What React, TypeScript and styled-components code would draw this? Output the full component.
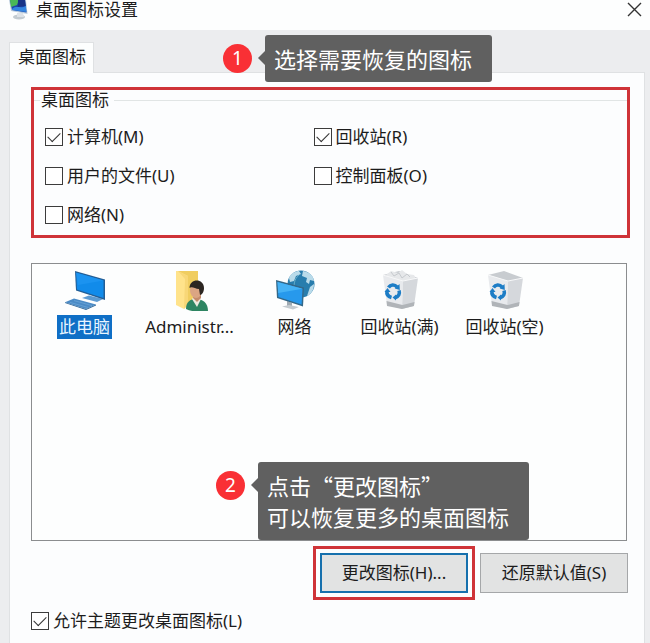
import React from "react";
import styled, { createGlobalStyle } from "styled-components";

const GlobalStyle = createGlobalStyle`
  *, *::before, *::after { box-sizing: border-box; }
  body {
    margin: 0;
    background: #ecedef;
    color: #1c1c1c;
    font: 17px/24px "Noto Sans", "Noto Sans CJK SC", sans-serif;
  }
`;

const Window = styled.div`
  position: relative;
  display: flex;
  flex-direction: column;
  min-height: 100vh;
  padding: 0 5px 0 9px;
  overflow: hidden;
`;

const TitleBar = styled.header`
  display: flex;
  align-items: flex-start;
  gap: 7px;
  height: 30px;
  margin: 0 -5px 0 -9px;
  padding: 0 8px;
  background: #fdfefe;
`;

const Title = styled.h1`
  flex: 1;
  margin: 0;
  font-size: 17px;
  font-weight: 400;
  line-height: 20px;
`;

const CloseButton = styled.button`
  display: flex;
  padding: 2px 0;
  border: 0;
  background: none;
  color: #333;
`;

const TabList = styled.div`
  display: flex;
  margin-top: 12px;
`;

const Tab = styled.button`
  position: relative;
  z-index: 1;
  height: 31px;
  margin-bottom: -1px;
  padding: 0 7px 2px 8px;
  border: 1px solid #dfe1e3;
  border-bottom: 0;
  background: #fdfefe;
  color: inherit;
  font: inherit;
`;

const Panel = styled.section`
  flex: 1;
  padding: 14px 14px 8px 21px;
  border: 1px solid #dfe1e3;
  border-bottom: 0;
  background: #fcfdfe;
`;

const Highlight = styled.div<{ $inset?: number }>`
  padding: ${(p) => p.$inset ?? 0}px;
  border: 3px solid #cf3338;
`;

const Group = styled.fieldset`
  display: grid;
  grid-template-columns: 1fr 1fr;
  row-gap: 15px;
  min-width: 0;
  margin: 0;
  padding: 15px 45px 8px 11px;
  border: 0 solid #e1e5e5;
  border-top-width: 1px;
`;

const Legend = styled.legend`
  margin-left: -5px;
  padding: 0 5px 0 1px;
  line-height: 20px;
`;

const CheckLabel = styled.label`
  display: flex;
  align-items: center;
  gap: 4px;
`;

const CheckBox = styled.input`
  display: grid;
  place-items: center;
  flex: none;
  width: 18px;
  height: 18px;
  margin: 0;
  appearance: none;
  border: 1px solid #3c3c3c;
  background: #fff;

  &:checked::after {
    content: "";
    width: 12px;
    height: 7px;
    margin-bottom: 4px;
    border: solid #333;
    border-width: 0 0 1px 1px;
    transform: rotate(-45deg);
  }
`;

const IconList = styled.ul`
  display: grid;
  grid-template-columns: repeat(auto-fill, 105px);
  align-content: start;
  height: 278px;
  margin: 25px 3px 0 0;
  padding: 6px 0 0;
  border: 1px solid #8b8d8f;
  background: #fdfefe;
  list-style: none;
`;

const IconItem = styled.li`
  display: flex;
  flex-direction: column;
  align-items: center;
  gap: 4px;
`;

const IconName = styled.span<{ $selected?: boolean }>`
  padding: 0 2px;
  background: ${(p) => (p.$selected ? "#0f6fc6" : "transparent")};
  color: ${(p) => (p.$selected ? "#e9f5ff" : "inherit")};
  white-space: nowrap;
`;

const Actions = styled.div`
  display: flex;
  justify-content: flex-end;
  align-items: center;
  gap: 5px;
  margin: 5px 2px 9px 0;
`;

const ActionButton = styled.button<{ $focused?: boolean }>`
  display: block;
  width: 148px;
  height: 40px;
  padding: 0;
  border: ${(p) => (p.$focused ? "2px solid #1670ad" : "1px solid #a5a7a9")};
  background: #e2e3e3;
  color: inherit;
  font: inherit;
`;

const Step = styled.div<{ $x: number; $y: number }>`
  position: absolute;
  z-index: 2;
  left: ${(p) => p.$x}px;
  top: ${(p) => p.$y}px;
  display: flex;
  align-items: flex-start;
  gap: 13px;
`;

const StepNumber = styled.span`
  width: 29px;
  height: 29px;
  margin-top: 9px;
  border-radius: 50%;
  background: #f93035;
  color: #fff;
  font-size: 19px;
  line-height: 28px;
  text-align: center;
`;

const Callout = styled.p`
  position: relative;
  margin: 0;
  padding: 8px 20px 8px 9px;
  border-radius: 3px;
  background: #606060;
  color: #fff;
  font: 22px/31px "Noto Sans CJK SC", sans-serif;
  white-space: nowrap;

  &::before {
    content: "";
    position: absolute;
    top: 16px;
    right: 100%;
    border: solid transparent;
    border-width: 7px 7px 7px 0;
    border-right-color: #606060;
  }
`;

const PersonalizeIcon = () => (
  <svg width="21" height="20" viewBox="0 0 21 20" aria-hidden="true">
    <ellipse cx="11" cy="17" rx="6" ry="2.4" fill="#c3cbd1" />
    <path d="M9 13h6l1 4h-7z" fill="#dde2e7" />
    <path d="M1 0h17l1.500 14L3 11z" fill="#b9cbdc" />
    <path d="M2 0h15l1.500 12.500L4 10z" fill="#1c46ae" />
    <path d="M2 0h9L9 5 3 7z" fill="#49b957" />
    <path d="M10 0h7l.8 6-8 1z" fill="#183387" />
    <path d="M4 9c4-4 9 0 14-3l.4 6L4 10z" fill="#3485df" />
  </svg>
);

const CloseIcon = () => (
  <svg width="15" height="15" viewBox="0 0 15 15" aria-hidden="true">
    <path d="M1 1l13 13M14 1L1 14" stroke="currentColor" strokeWidth="1.4" />
  </svg>
);

const PcIcon = () => (
  <svg width="42" height="41" viewBox="0 0 42 41" aria-hidden="true">
    <path d="M18 28l7-2.5L39 29l-6 3z" fill="#5d9bd2" />
    <path d="M11 1l30 8.500v20.500L12 20.500z" fill="#235e96" />
    <path d="M12.200 2.800L39.500 10.500v17.500L13 19.400z" fill="#118bea" />
    <path d="M12.200 2.800L39.500 10.500 14 15z" fill="#1b93f0" />
    <path d="M1 32.200L10 28.500 32 34.400 22 38.900z" fill="#4b8bc6" />
    <path d="M6 32.400l18 5M10 30.600l18 5" stroke="#6ba4d6" strokeWidth=".8" />
    <path d="M1 32.200l21 6.700 10-4.500v1L22 40 1 33z" fill="#2f6799" />
  </svg>
);

const UserIcon = () => (
  <svg width="42" height="41" viewBox="0 0 42 41" aria-hidden="true">
    <path d="M7 1h22v28l-11 5L7 35z" fill="#f0cd60" />
    <path d="M7 1h2l10 5v29l-4 4-8-4z" fill="#ffe38b" />
    <path d="M19 6v29l-4 4 1-30-7-8z" fill="#f8d777" />
    <path d="M17 39c0-7 4-10 10-10 7 0 12 4 12 12-8 1-16 1-22-2z" fill="#2e8562" />
    <path d="M23 29l5 8 4-8-2-3h-5z" fill="#eee9df" />
    <path d="M24 24h8v4l-4 4-4-4z" fill="#c48b6b" />
    <ellipse cx="27" cy="20.500" rx="6" ry="7.500" fill="#dba583" />
    <path d="M20.500 18c0-10 14.500-10 14.500 0 0 4-2 7-4 7l-1-6c-4 0-7-3-9.500-1z" fill="#2c2622" />
  </svg>
);

const NetworkIcon = () => (
  <svg width="42" height="41" viewBox="0 0 42 41" aria-hidden="true">
    <circle cx="27" cy="14" r="13.500" fill="#287dad" />
    <path d="M15 8c2-5 7-7 10-7l2 3-5 2-2 5-4 1zM29 1c7 1 11 6 11 10l-4-1-1 4-3-2 1-4-5-2zM36 17l4-3c0 6-3 10-7 12z" fill="#b9dbea" />
    <path d="M25 5c-5 4-6 11-4 18" fill="none" stroke="#67aeca" />
    <path d="M13 31l5 2v4h-5z" fill="#9faab2" />
    <path d="M8 36.500l7-1.500 10 2-6 2.500z" fill="#c4cbd0" />
    <path d="M2 10l28 7.500-1 19L3 28z" fill="#346888" />
    <path d="M3.500 12L28.500 18.700l-.9 15.800L4.400 27z" fill="#2799ec" />
    <path d="M3.500 12L28.500 18.700 4.200 23z" fill="#45b2f5" />
  </svg>
);

const BinIcon = ({ full }: { full?: boolean }) => (
  <svg width="42" height="41" viewBox="0 0 42 41" aria-hidden="true">
    <path d="M4 5L20 1l19 7-15 4z" fill="#c8ccd0" />
    {full && (
      <>
        <path d="M7 5l5-4 7 2 4-3 5 4 7 1 2 4-13 3L8 8z" fill="#e6e8ea" />
        <path d="M12 2l3 4 5-3 3 5 5-4 3 3" fill="none" stroke="#c6cace" />
      </>
    )}
    <path d="M4 5l20 6-1 28-15-4z" fill="#e8eaed" />
    <path d="M24 11l15-3-4 28-12 3z" fill="#d5d8dc" />
    <path d="M7.500 31l16 4-.5 4-15-3zM23.500 35l12-3-.6 4-12 3z" fill="#b0b4b8" />
    <path d="M4 5l20 6 15-3" fill="none" stroke="#f7f8f9" />
    <g fill="none" stroke="#1d7dc6" strokeWidth="3.6">
      <path d="M9.500 17.500c2-3 6-3.400 8.500-.5" />
      <path d="M20 20.500c1.200 3.500-.6 6-3.500 7" />
      <path d="M12.500 27.500c-3.500-1-5-3.500-4.500-6.500" />
    </g>
    <path d="M20.500 14l.3 6-5-1.500zM17 24.500v6l-3.500-3zM5.500 22l3-4 3 4z" fill="#1d7dc6" />
  </svg>
);

const desktopOptions = [
  { label: "计算机(M)", checked: true },
  { label: "回收站(R)", checked: true },
  { label: "用户的文件(U)", checked: false },
  { label: "控制面板(O)", checked: false },
  { label: "网络(N)", checked: false },
];

const desktopIcons = [
  { name: "此电脑", icon: <PcIcon />, selected: true },
  { name: "Administr...", icon: <UserIcon /> },
  { name: "网络", icon: <NetworkIcon /> },
  { name: "回收站(满)", icon: <BinIcon full /> },
  { name: "回收站(空)", icon: <BinIcon /> },
];

const CheckOption = ({ label, checked }: { label: string; checked: boolean }) => (
  <CheckLabel>
    <CheckBox type="checkbox" defaultChecked={checked} />
    {label}
  </CheckLabel>
);

export default function App() {
  return (
    <>
      <GlobalStyle />
      <Window>
        <TitleBar>
          <PersonalizeIcon />
          <Title>桌面图标设置</Title>
          <CloseButton type="button" aria-label="关闭">
            <CloseIcon />
          </CloseButton>
        </TitleBar>
        <TabList role="tablist">
          <Tab type="button" role="tab" aria-selected="true">
            桌面图标
          </Tab>
        </TabList>
        <Panel>
          <Highlight>
            <Group>
              <Legend>桌面图标</Legend>
              {desktopOptions.map((option) => (
                <CheckOption key={option.label} {...option} />
              ))}
            </Group>
          </Highlight>
          <IconList>
            {desktopIcons.map(({ name, icon, selected }) => (
              <IconItem key={name}>
                {icon}
                <IconName $selected={selected}>{name}</IconName>
              </IconItem>
            ))}
          </IconList>
          <Actions>
            <Highlight $inset={4}>
              <ActionButton type="button" $focused>
                更改图标(H)...
              </ActionButton>
            </Highlight>
            <ActionButton type="button">还原默认值(S)</ActionButton>
          </Actions>
          <CheckOption label="允许主题更改桌面图标(L)" checked />
        </Panel>
        <Step $x={223} $y={35}>
          <StepNumber>1</StepNumber>
          <Callout>选择需要恢复的图标</Callout>
        </Step>
        <Step $x={216} $y={462}>
          <StepNumber>2</StepNumber>
          <Callout>
            点击“更改图标”
            <br />
            可以恢复更多的桌面图标
          </Callout>
        </Step>
      </Window>
    </>
  );
}
